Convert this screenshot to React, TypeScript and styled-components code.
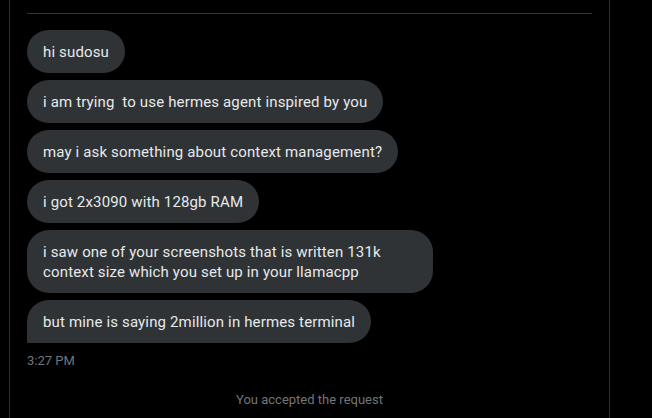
import React from "react";
import styled, { createGlobalStyle } from "styled-components";

const Global = createGlobalStyle`
  *, *::before, *::after { box-sizing: border-box; }
  html, body { margin: 0; padding: 0; background: #000; }
  body { font-family: Roboto, "Noto Sans", "Liberation Sans", sans-serif; }
  #root { height: 418px; overflow: hidden; }
`;

const Page = styled.div`
  display: flex;
  height: 418px;
  background: #000;
`;

const Column = styled.div`
  margin-left: 9px;
  width: 601px;
  border-left: 1px solid #2f3336;
  border-right: 1px solid #2f3336;
  padding: 13px 17px 0;
  display: flex;
  flex-direction: column;
`;

const Divider = styled.div`
  height: 1px;
  background: #2f3336;
  margin-bottom: 16px;
`;

const Thread = styled.div`
  display: flex;
  flex-direction: column;
  align-items: flex-start;
  gap: 7px;
`;

const Bubble = styled.div<{ $last?: boolean }>`
  background: #2f3336;
  color: #e7e9ea;
  font-size: 15px;
  line-height: 20px;
  letter-spacing: 0.15px;
  padding: 11.5px 16px;
  border-radius: 22px;
  border-bottom-left-radius: ${(p) => (p.$last ? "0" : "22px")};
  max-width: 406px;
`;

const Time = styled.div`
  color: #71767b;
  font-size: 13px;
  line-height: 16px;
  margin-top: 10px;
`;

const Notice = styled.div`
  color: #71767b;
  font-size: 13px;
  line-height: 16px;
  text-align: center;
  margin-top: 23px;
`;

const messages = [
  "hi sudosu",
  "i am trying\u00a0 to use hermes agent inspired by you",
  "may i ask something about context management?",
  "i got 2x3090 with 128gb RAM",
  "i saw one of your screenshots that is written 131k context size which you set up in your llamacpp",
  "but mine is saying 2million in hermes terminal",
];

export default function App() {
  return (
    <Page>
      <Global />
      <Column>
        <Divider />
        <Thread>
          {messages.map((m, i) => (
            <Bubble key={i} $last={i === messages.length - 1}>
              {m}
            </Bubble>
          ))}
        </Thread>
        <Time>3:27 PM</Time>
        <Notice>You accepted the request</Notice>
      </Column>
    </Page>
  );
}
